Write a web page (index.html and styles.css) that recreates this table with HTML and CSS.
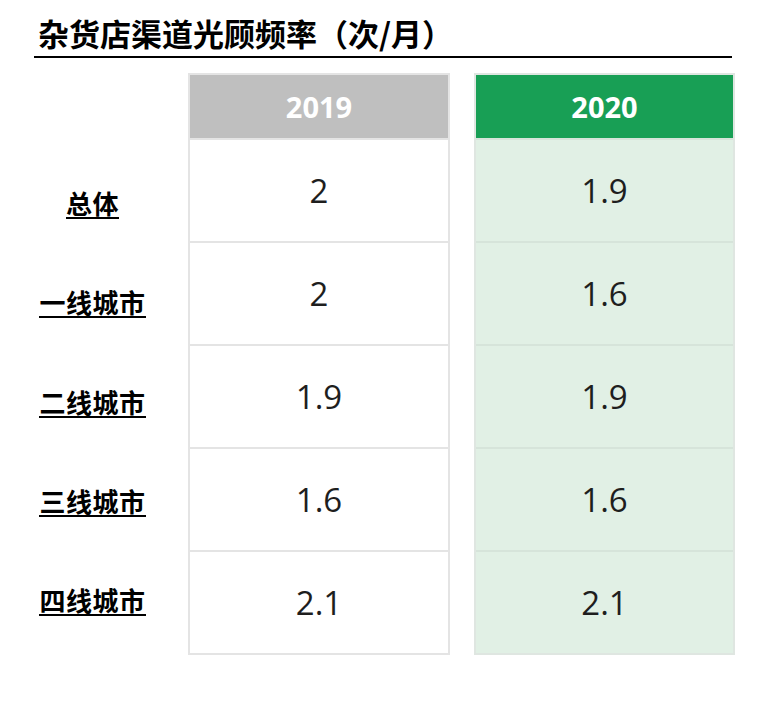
FILE: index.html
```html
<!DOCTYPE html>
<html lang="zh">
<head>
<meta charset="utf-8">
<title>杂货店渠道光顾频率</title>
<link rel="stylesheet" href="styles.css">
</head>
<body>
<div class="title">杂货店渠道光顾频率（次/月）</div>
<div class="table">
  <div class="labels">
    <div class="label"><span>总体</span></div>
    <div class="label"><span>一线城市</span></div>
    <div class="label"><span>二线城市</span></div>
    <div class="label"><span>三线城市</span></div>
    <div class="label"><span>四线城市</span></div>
  </div>
  <div class="col col-2019">
    <div class="head">2019</div>
    <div class="cell">2</div>
    <div class="cell">2</div>
    <div class="cell">1.9</div>
    <div class="cell">1.6</div>
    <div class="cell">2.1</div>
  </div>
  <div class="col col-2020">
    <div class="head">2020</div>
    <div class="cell">1.9</div>
    <div class="cell">1.6</div>
    <div class="cell">1.9</div>
    <div class="cell">1.6</div>
    <div class="cell">2.1</div>
  </div>
</div>
</body>
</html>
```

FILE: styles.css
```css
html, body {
  margin: 0;
  padding: 0;
  background: #ffffff;
}
body {
  font-family: "Noto Sans CJK SC", "Noto Sans", sans-serif;
  color: #000;
}
.title {
  margin-left: 34px;
  width: 694px;
  padding: 14px 0 4px 4px;
  font-size: 31px;
  line-height: 38px;
  font-weight: 700;
  border-bottom: 2px solid #000;
}
.table {
  display: flex;
  align-items: flex-start;
  margin-top: 15px;
}
.labels {
  width: 185px;
  padding-top: 116px;
  display: flex;
  flex-direction: column;
}
.label {
  height: 99.3px;
  text-align: center;
}
.label span {
  display: inline-block;
  font-size: 26px;
  font-weight: 700;
  line-height: 28px;
  letter-spacing: 0.5px;
  border-bottom: 2px solid #000;
}
.col {
  border: 2px solid #e4e4e4;
  display: flex;
  flex-direction: column;
}
.col-2019 {
  width: 258px;
  margin-left: 3px;
}
.col-2020 {
  width: 257px;
  margin-left: 24px;
  background: #e1f0e5;
  border-color: #dfe6e1;
}
.head {
  height: 63px;
  display: flex;
  align-items: center;
  justify-content: center;
  font-family: "Open Sans", sans-serif;
  font-weight: 700;
  font-size: 29px;
  color: #fff;
}
.col-2019 .head {
  background: #bfbfbf;
}
.col-2020 .head {
  background: #189f55;
}
.cell {
  height: 101px;
  display: flex;
  align-items: center;
  justify-content: center;
  font-family: "Open Sans", sans-serif;
  font-size: 33px;
  color: #1e1e1e;
  border-top: 2px solid #e4e4e4;
}
.col-2020 .cell {
  border-top-color: #d6e4da;
}
```
